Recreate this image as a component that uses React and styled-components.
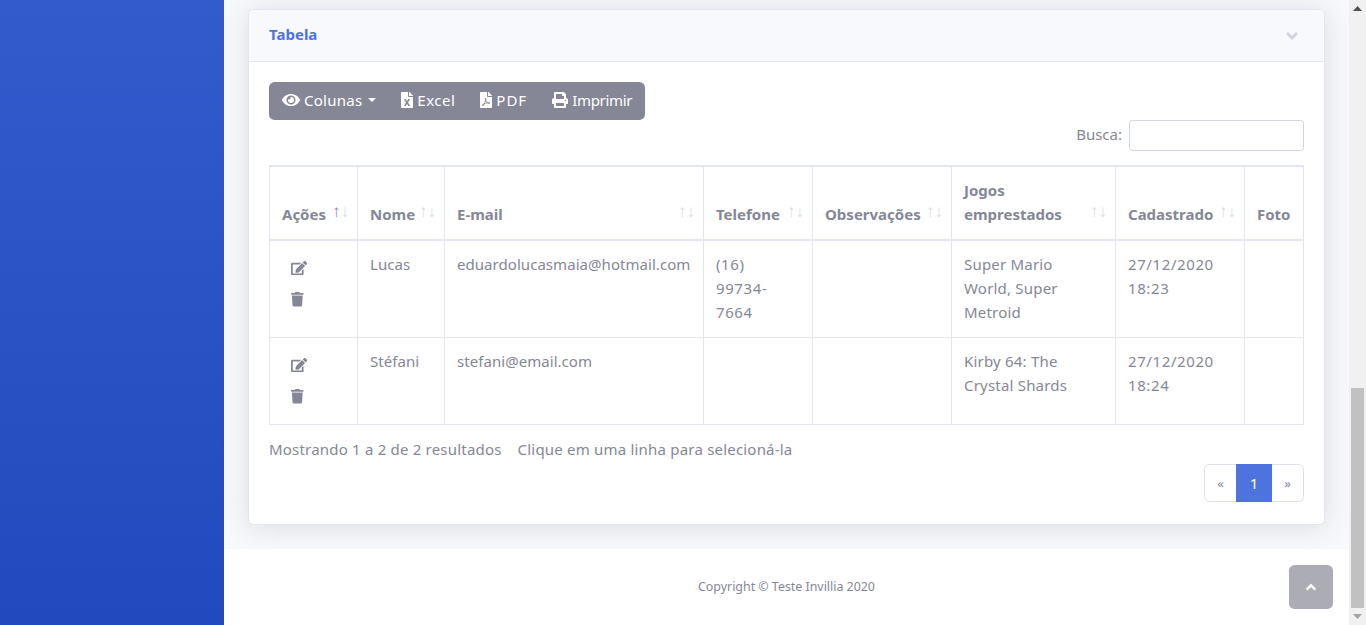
import React from "react";
import styled, { createGlobalStyle } from "styled-components";
import {
  FaEye,
  FaFileExcel,
  FaFilePdf,
  FaPrint,
  FaEdit,
  FaTrash,
  FaAngleDown,
  FaAngleUp,
} from "react-icons/fa";

const GlobalStyle = createGlobalStyle`
  html, body {
    margin: 0;
    padding: 0;
    height: 625px;
    overflow: hidden;
  }
  * { box-sizing: border-box; }
  body {
    font-family: "Noto Sans", "Open Sans", sans-serif;
    font-size: 15px;
    color: #858796;
  }
`;

const Page = styled.div`
  display: flex;
  width: 1366px;
  height: 625px;
  overflow: hidden;
  position: relative;
`;

const Sidebar = styled.div`
  width: 224px;
  flex-shrink: 0;
  background: linear-gradient(180deg, #345bcc, #224abe);
`;

const Content = styled.div`
  width: 1125px;
  display: flex;
  flex-direction: column;
`;

const Main = styled.div`
  height: 549px;
  flex-shrink: 0;
  background: #f8f9fc;
  padding: 9px 24px 0 24px;
`;

const Card = styled.div`
  height: 516px;
  background: #fff;
  border: 1px solid #e3e6f0;
  border-radius: 5.6px;
  box-shadow: 0 2.4px 28px 0 rgba(58, 59, 69, 0.15);
`;

const CardHeader = styled.div`
  height: 52px;
  background: #f8f9fc;
  border-bottom: 1px solid #e3e6f0;
  border-radius: 5.6px 5.6px 0 0;
  padding: 0 20px;
  display: flex;
  align-items: center;
  justify-content: space-between;
`;

const CardTitle = styled.h6`
  margin: 0 0 4px;
  font-size: 15px;
  font-weight: 700;
  color: #4e73df;
`;

const Chevron = styled(FaAngleDown)`
  color: #d1d3e2;
  font-size: 18px;
  margin-right: 3.5px;
`;

const CardBody = styled.div`
  padding: 20px;
`;

const ButtonGroup = styled.div`
  display: inline-flex;
  height: 38px;
  background: #858796;
  border-radius: 5.6px;
  vertical-align: top;
`;

const ToolButton = styled.div`
  display: flex;
  align-items: center;
  gap: 4px;
  padding: 0 13px 2px;
  color: #fff;
  font-size: 15px;
  white-space: nowrap;
  & + & { margin-left: -1px; }
  svg {
    flex-shrink: 0;
    height: 16px;
    width: ${(p) => p.$icon}px;
  }
`;

const ButtonText = styled.span`
  letter-spacing: ${(p) => p.$ls || 0}px;
`;

const Caret = styled.span`
  width: 0;
  height: 0;
  margin-left: 2px;
  border-top: 4.8px solid #fff;
  border-left: 4.8px solid transparent;
  border-right: 4.8px solid transparent;
`;

const SearchRow = styled.div`
  display: flex;
  justify-content: flex-end;
  align-items: center;
  gap: 7px;
  height: 31px;
  margin-bottom: 14px;
`;

const SearchLabel = styled.label`
  padding-bottom: 3px;
`;

const SearchInput = styled.input`
  width: 175px;
  height: 31px;
  border: 1px solid #d1d3e2;
  border-radius: 3.2px;
  background: #fff;
`;

const Table = styled.table`
  border-collapse: collapse;
  table-layout: fixed;
  width: 1035px;
  border: 1px solid #e3e6f0;
`;

const Col = styled.col`
  width: ${(p) => p.$w}px;
`;

const Th = styled.th`
  position: relative;
  border: 1px solid #e3e6f0;
  border-bottom-width: 2px;
  border-top-width: 2px;
  padding: 10px 12px 13px;
  height: 74px;
  vertical-align: bottom;
  text-align: left;
  font-size: 15px;
  font-weight: 700;
  line-height: 24px;
`;

const SortArrows = styled.span`
  position: absolute;
  right: 8px;
  bottom: 15px;
  font-family: "Liberation Sans", sans-serif;
  font-size: 17px;
  font-weight: 400;
  color: #dadbe0;
`;

const ActiveArrow = styled.span`
  color: #8e8f9d;
`;

const Td = styled.td`
  border: 1px solid #e3e6f0;
  padding: 11px 12px 13px;
  vertical-align: top;
  font-size: 15px;
  line-height: 24px;
  letter-spacing: ${(p) => p.$ls ?? 0.05}px;
  white-space: pre-line;
`;

const ActionCell = styled(Td)`
  padding: 20px 21px 20px;
`;

const ActionIcons = styled.div`
  display: flex;
  flex-direction: column;
  align-items: flex-start;
  gap: 17px;
`;

const EditIcon = styled(FaEdit)`
  display: block;
  width: 16.2px;
  height: 14.4px;
`;

const TrashIcon = styled(FaTrash)`
  display: block;
  width: 12.6px;
  height: 14.4px;
`;

const InfoRow = styled.div`
  display: flex;
  gap: 16px;
  margin-top: 12px;
  line-height: 24px;
  letter-spacing: 0.2px;
`;

const PagerRow = styled.div`
  display: flex;
  justify-content: flex-end;
  margin-top: 3px;
`;

const Pager = styled.div`
  display: flex;
  height: 38px;
  border: 1px solid #dddfeb;
  border-radius: 5.6px;
`;

const PageLink = styled.div`
  width: ${(p) => (p.$active ? 36 : 31)}px;
  margin: ${(p) => (p.$active ? "-1px 0" : "0")};
  display: flex;
  align-items: center;
  justify-content: center;
  font-size: ${(p) => (p.$active ? 15 : 13)}px;
  color: ${(p) => (p.$active ? "#fff" : "#858796")};
  background: ${(p) => (p.$active ? "#4e73df" : "transparent")};
`;

const Footer = styled.footer`
  flex: 1;
  background: #fff;
  display: flex;
  align-items: center;
  justify-content: center;
  padding-bottom: 1px;
  font-size: 12.4px;
  color: #858796;
`;

const ScrollTop = styled.div`
  position: absolute;
  left: 1289px;
  top: 565px;
  width: 44px;
  height: 44px;
  border-radius: 5.6px;
  background: rgba(90, 92, 105, 0.5);
  display: flex;
  align-items: center;
  justify-content: center;
  color: #fff;
  font-size: 16px;
`;

const Scrollbar = styled.div`
  width: 17px;
  flex-shrink: 0;
  background: #f1f1f1;
  display: flex;
  flex-direction: column;
`;

const ScrollArrow = styled.div`
  height: 17px;
  display: flex;
  align-items: center;
  justify-content: center;
  color: ${(p) => p.$color};
`;

const ScrollTrack = styled.div`
  flex: 1;
  display: flex;
  flex-direction: column;
  justify-content: flex-end;
`;

const ScrollThumb = styled.div`
  height: 220px;
  margin: 0 2px;
  background: #c1c1c1;
`;

const columns = [
  { label: "Ações", w: 88, active: true },
  { label: "Nome", w: 87 },
  { label: "E-mail", w: 259 },
  { label: "Telefone", w: 109 },
  { label: "Observações", w: 139 },
  { label: "Jogos emprestados", w: 164 },
  { label: "Cadastrado", w: 129 },
  { label: "Foto", w: 59, plain: true },
];

const rows = [
  {
    nome: "Lucas",
    email: "eduardolucasmaia@hotmail.com",
    telefone: "(16)\n99734-\n7664",
    jogos: "Super Mario\nWorld, Super\nMetroid",
    data: "27/12/2020\n18:23",
  },
  {
    nome: "Stéfani",
    email: "stefani@email.com",
    telefone: "",
    jogos: "Kirby 64: The\nCrystal Shards",
    data: "27/12/2020\n18:24",
  },
];

export default function App() {
  return (
    <Page>
      <GlobalStyle />
      <Sidebar />
      <Content>
        <Main>
          <Card>
            <CardHeader>
              <CardTitle>Tabela</CardTitle>
              <Chevron />
            </CardHeader>
            <CardBody>
              <ButtonGroup>
                <ToolButton $icon={18}>
                  <FaEye /> <ButtonText $ls={0.25}>Colunas</ButtonText> <Caret />
                </ToolButton>
                <ToolButton $icon={12}>
                  <FaFileExcel /> <ButtonText $ls={0.5}>Excel</ButtonText>
                </ToolButton>
                <ToolButton $icon={12}>
                  <FaFilePdf /> <ButtonText $ls={1}>PDF</ButtonText>
                </ToolButton>
                <ToolButton $icon={16}>
                  <FaPrint /> <ButtonText $ls={-0.3}>Imprimir</ButtonText>
                </ToolButton>
              </ButtonGroup>
              <SearchRow>
                <SearchLabel>Busca:</SearchLabel> <SearchInput />
              </SearchRow>
              <Table>
                <colgroup>
                  {columns.map((c) => (
                    <Col key={c.label} $w={c.w} />
                  ))}
                </colgroup>
                <thead>
                  <tr>
                    {columns.map((c) => (
                      <Th key={c.label}>
                        {c.label}
                        {!c.plain && (
                          <SortArrows>
                            {c.active ? <ActiveArrow>↑</ActiveArrow> : "↑"}↓
                          </SortArrows>
                        )}
                      </Th>
                    ))}
                  </tr>
                </thead>
                <tbody>
                  {rows.map((r) => (
                    <tr key={r.nome}>
                      <ActionCell>
                        <ActionIcons>
                          <EditIcon />
                          <TrashIcon />
                        </ActionIcons>
                      </ActionCell>
                      <Td>{r.nome}</Td>
                      <Td>{r.email}</Td>
                      <Td $ls={0.6}>{r.telefone}</Td>
                      <Td />
                      <Td $ls={0.2}>{r.jogos}</Td>
                      <Td $ls={0.6}>{r.data}</Td>
                      <Td />
                    </tr>
                  ))}
                </tbody>
              </Table>
              <InfoRow>
                <span>Mostrando 1 a 2 de 2 resultados</span>
                <span>Clique em uma linha para selecioná-la</span>
              </InfoRow>
              <PagerRow>
                <Pager>
                  <PageLink>«</PageLink>
                  <PageLink $active>1</PageLink>
                  <PageLink>»</PageLink>
                </Pager>
              </PagerRow>
            </CardBody>
          </Card>
        </Main>
        <Footer>Copyright © Teste Invillia 2020</Footer>
      </Content>
      <Scrollbar>
        <ScrollArrow $color="#505050">
          <svg width="9" height="5" viewBox="0 0 9 5"><path d="M4.5 0L9 5H0z" fill="currentColor" /></svg>
        </ScrollArrow>
        <ScrollTrack>
          <ScrollThumb />
        </ScrollTrack>
        <ScrollArrow $color="#a3a3a3">
          <svg width="9" height="5" viewBox="0 0 9 5"><path d="M0 0h9L4.5 5z" fill="currentColor" /></svg>
        </ScrollArrow>
      </Scrollbar>
      <ScrollTop>
        <FaAngleUp />
      </ScrollTop>
    </Page>
  );
}
